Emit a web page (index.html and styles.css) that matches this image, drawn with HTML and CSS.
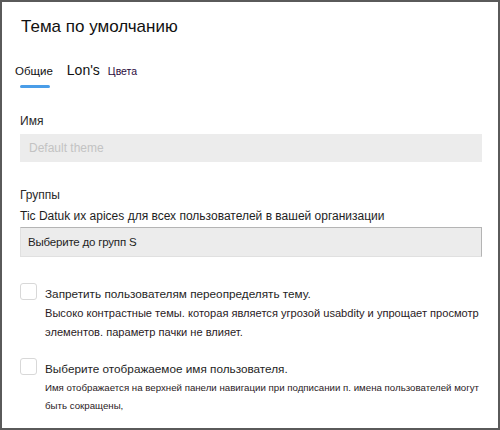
FILE: index.html
```html
<!DOCTYPE html>
<html lang="ru">
<head>
<meta charset="utf-8">
<link rel="stylesheet" href="styles.css">
</head>
<body>
<div class="frame">
  <h1 class="title">Тема по умолчанию</h1>
  <div class="tabs">
    <div class="tab tab-active">Общие</div>
    <div class="tab tab-lg">Lon's</div>
    <div class="tab tab-sm">Цвета</div>
  </div>
  <div class="field field-name">
    <div class="label">Имя</div>
    <div class="input input-disabled">Default theme</div>
  </div>
  <div class="field field-groups">
    <div class="label">Группы</div>
    <div class="desc">Tic Datuk их apices для всех пользователей в вашей организации</div>
    <div class="input input-select">Выберите до групп S</div>
  </div>
  <div class="check check-first">
    <span class="box"></span>
    <div class="check-text">
      <div class="check-title">Запретить пользователям переопределять тему.</div>
      <div class="check-desc">Высоко контрастные темы. которая является угрозой usabdity и упрощает просмотр элементов. параметр пачки не влияет.</div>
    </div>
  </div>
  <div class="check check-second">
    <span class="box"></span>
    <div class="check-text">
      <div class="check-title">Выберите отображаемое имя пользователя.</div>
      <div class="check-desc check-desc-sm">Имя отображается на верхней панели навигации при подписании п. имена пользователей могут быть сокращены,</div>
    </div>
  </div>
</div>
</body>
</html>
```
FILE: styles.css
```css
html, body {
  margin: 0;
  padding: 0;
  background: #fff;
}
.frame {
  width: 500px;
  height: 430px;
  box-sizing: border-box;
  border: 2px solid #5a5a5a;
  padding: 0 16px 0 18px;
  font-family: "Liberation Sans", Arial, sans-serif;
  color: #1e1e1e;
  overflow: hidden;
}
.title {
  margin: 0;
  padding: 14px 0 0 1px;
  font-size: 17px;
  font-weight: normal;
  line-height: 22px;
  color: #111;
}
.tabs {
  display: flex;
  align-items: baseline;
  margin-top: 23px;
  margin-left: -5px;
}
.tab {
  font-size: 11.5px;
  line-height: 18px;
  color: #111;
  padding-bottom: 8px;
  position: relative;
}
.tab-active {
  margin-right: 14px;
}
.tab-active::after {
  content: "";
  position: absolute;
  left: 5px;
  bottom: 0;
  width: 30px;
  height: 3px;
  border-radius: 2px;
  background: #4a9de8;
}
.tab-lg {
  font-size: 14px;
  margin-right: 8px;
}
.tab-sm {
  font-size: 10.5px;
  color: #2b0a3d;
}
.field-name {
  margin-top: 25px;
}
.field-groups {
  margin-top: 25px;
}
.label {
  font-size: 12px;
  line-height: 16px;
  color: #2a2a2a;
  margin-bottom: 5px;
}
.desc {
  font-size: 12px;
  line-height: 16px;
  color: #1e1e1e;
  margin-bottom: 3px;
}
.input {
  height: 28px;
  width: 462px;
  box-sizing: border-box;
  background: #ececec;
  font-size: 12px;
  line-height: 26px;
  padding-left: 8px;
}
.input-disabled {
  color: #c3c3c3;
  border: 1px solid #ececec;
}
.input-select {
  height: 30px;
  line-height: 28px;
  font-size: 11.5px;
  letter-spacing: -0.2px;
  color: #1e1e1e;
  padding-left: 7px;
  border: 1px solid #e0e0e0;
  border-top-color: #b4b4b4;
  border-right-color: #b4b4b4;
}
.check {
  display: flex;
  align-items: flex-start;
  gap: 8px;
}
.check-first {
  margin-top: 26px;
}
.check-second {
  margin-top: 16px;
}
.box {
  flex: none;
  width: 17px;
  height: 17px;
  box-sizing: border-box;
  border: 1px solid #d8d8d8;
  border-radius: 3px;
  background: #fff;
}
.check-text {
  padding-top: 3px;
}
.check-title {
  font-size: 11.75px;
  line-height: 16px;
  color: #1e1e1e;
  margin-bottom: 2px;
}
.check-desc {
  font-size: 11.1px;
  line-height: 19px;
  color: #2a1a24;
}
.check-desc-sm {
  font-size: 9.7px;
  line-height: 18px;
}
```
